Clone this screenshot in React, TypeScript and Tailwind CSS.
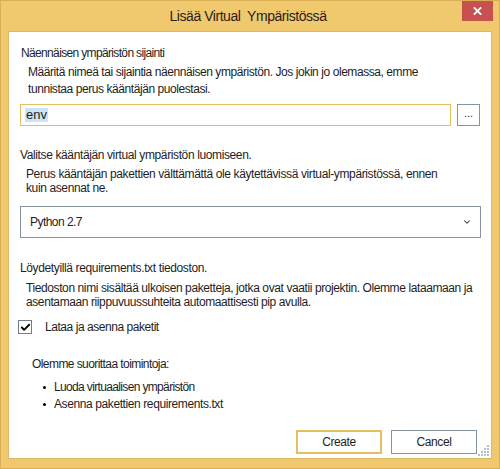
import { Check, ChevronDown } from "lucide-react";

const font = { fontFamily: '"Liberation Sans", Arial, sans-serif' };

function ResizeGrip() {
  const dots = [
    [9, 0],
    [6, 3],
    [9, 3],
    [3, 6],
    [6, 6],
    [9, 6],
    [0, 9],
    [3, 9],
    [6, 9],
    [9, 9],
  ];
  return (
    <svg width="11" height="11" className="absolute right-[2px] bottom-[2px]">
      {dots.map(([x, y], i) => (
        <rect key={i} x={x} y={y} width="2" height="2" fill="#b8bfc8" />
      ))}
    </svg>
  );
}

export default function App() {
  return (
    <div
      className="w-[500px] h-[469px] bg-[#f0c86e] border border-[#d9ae55] flex flex-col text-[#1e1e1e]"
      style={font}
    >
      {/* Title bar */}
      <div className="relative h-[30px] shrink-0 flex items-center justify-center">
        <span className="text-[14px] tracking-[-0.45px] text-[#2b1d1d] -ml-[4px] whitespace-pre">
          Lisää Virtual  Ympäristössä
        </span>
        <div className="absolute right-[6px] top-0 w-[31px] h-[20px] bg-[#c75050] flex items-center justify-center">
          <svg width="9" height="8" viewBox="0 0 9 8">
            <path d="M0.8 0.3 L8.2 7.7 M8.2 0.3 L0.8 7.7" stroke="white" strokeWidth="1.8" />
          </svg>
        </div>
      </div>

      {/* Content */}
      <div className="relative mx-[7px] mb-[9px] flex-1 bg-white border border-[#dcb864] flex flex-col pl-[11px] pr-[11px] text-[12px] whitespace-nowrap">
        <div className="mt-[13px] pl-[1px] leading-[16px] tracking-[-0.65px]">
          Näennäisen ympäristön sijainti
        </div>
        <div className="mt-[3px] pl-[8px] leading-[17px] tracking-[-0.43px]">
          Määritä nimeä tai sijaintia näennäisen ympäristön. Jos jokin jo olemassa, emme
          <br />
          tunnistaa perus kääntäjän puolestasi.
        </div>

        <div className="mt-[6px] flex items-center">
          <div className="w-[432px] h-[22px] border border-[#e6bf5c] flex items-center pl-[4px]">
            <span className="bg-[#cce4f7] px-[1px] leading-[14px] text-[13px]">env</span>
          </div>
          <div className="ml-[6px] w-[23px] h-[22px] border border-[#8793a4] flex items-center justify-center text-[11px] leading-none pb-[3px]">
            ...
          </div>
        </div>

        <div className="mt-[21px] leading-[16px] tracking-[-0.38px]">
          Valitse kääntäjän virtual ympäristön luomiseen.
        </div>
        <div className="mt-[4px] pl-[6px] leading-[14px] tracking-[-0.38px]">
          Perus kääntäjän pakettien välttämättä ole käytettävissä virtual-ympäristössä, ennen
          <br />
          kuin asennat ne.
        </div>

        <div className="mt-[11px] w-[461px] h-[32px] border border-[#8793a4] flex items-center justify-between pl-[9px] pr-[8px]">
          <span className="tracking-[-0.54px]">Python 2.7</span>
          <ChevronDown size={10} strokeWidth={2.5} className="text-[#333]" />
        </div>

        <div className="mt-[22px] leading-[16px] tracking-[-0.37px]">
          Löydetyillä requirements.txt tiedoston.
        </div>
        <div className="mt-[5px] pl-[6px] leading-[14px] tracking-[-0.4px]">
          Tiedoston nimi sisältää ulkoisen paketteja, jotka ovat vaatii projektin. Olemme lataamaan ja
          <br />
          asentamaan riippuvuussuhteita automaattisesti pip avulla.
        </div>

        <div className="mt-[11px] flex items-center">
          <div className="-ml-[2px] w-[14px] h-[14px] border border-[#707d8e] flex items-center justify-center">
            <Check size={11} strokeWidth={4} className="text-black" />
          </div>
          <span className="ml-[13px] leading-[14px] tracking-[-0.45px]">Lataa ja asenna paketit</span>
        </div>

        <div className="mt-[22px] pl-[12px] leading-[16px] tracking-[-0.57px]">
          Olemme suorittaa toimintoja:
        </div>
        <ul className="mt-[7px] pl-[23px] leading-[17px]">
          <li className="flex items-center tracking-[-0.65px]">
            <span className="w-[3px] h-[3px] rounded-full bg-black mr-[8px]" />
            Luoda virtuaalisen ympäristön
          </li>
          <li className="flex items-center tracking-[-0.4px]">
            <span className="w-[3px] h-[3px] rounded-full bg-black mr-[8px]" />
            Asenna pakettien requirements.txt
          </li>
        </ul>

        <div className="mt-auto mb-[4px] flex justify-end pr-[3px] tracking-[-0.4px]">
          <button className="w-[86px] h-[24px] border-2 border-[#e6bf5c] bg-white text-[12px]">
            Create
          </button>
          <button className="ml-[9px] w-[86px] h-[24px] border border-[#8793a4] bg-white text-[12px]">
            Cancel
          </button>
        </div>
        <ResizeGrip />
      </div>
    </div>
  );
}
